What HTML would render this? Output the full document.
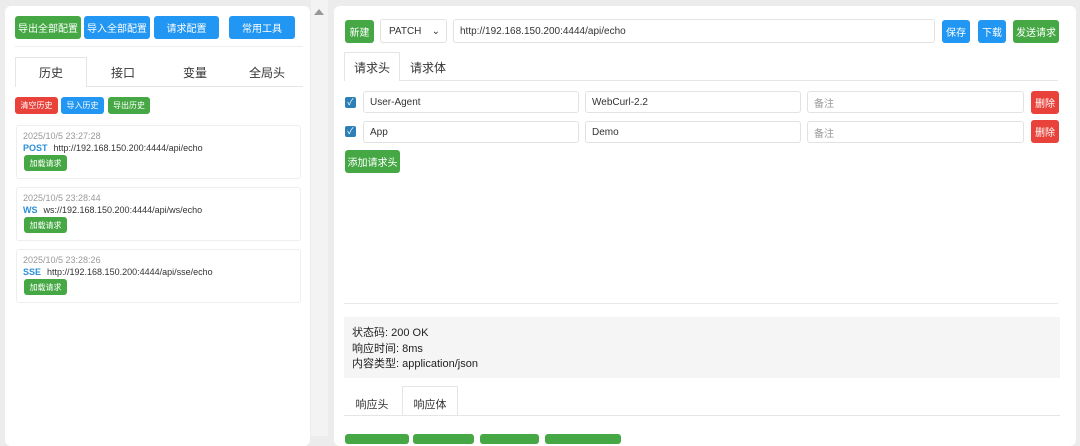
<!DOCTYPE html>
<html><head><meta charset="utf-8"><style>
*{box-sizing:border-box;margin:0;padding:0}
body{width:1080px;height:436px;overflow:hidden;background:#ececec;font-family:"Liberation Sans","Noto Sans CJK SC",sans-serif;position:relative;color:#333}
.a{position:absolute}
.p{background:#fff;border-radius:6px}
.b{position:absolute;color:#fff;font-size:10px;display:flex;align-items:center;justify-content:center;border-radius:3px;white-space:nowrap}
.g{background:#46a845}.bl{background:#2196f3}.r{background:#e8423a}
.in{position:absolute;border:1px solid #e2e2e2;border-radius:3px;font-size:10px;padding-left:6px;display:flex;align-items:center;background:#fff;color:#333}
.card{position:absolute;left:16px;width:285px;border:1px solid #eee;border-radius:3px}
.t{font-size:9px;color:#999;position:absolute;left:6px}
.m{font-size:9px;position:absolute;left:6px;color:#333}
.m b{color:#2b8fd6;margin-right:6px}
.cb{position:absolute;width:11px;height:11px;background:#2d7fb8;border-radius:2px;color:#fff;font-size:9px;line-height:11px;text-align:center}
</style></head><body>
<div class="a p" style="left:5px;top:6px;width:305px;height:440px"></div>
<div class="a" style="left:311px;top:0;width:17px;height:436px;background:#f3f3f3"></div>
<div class="a" style="left:314px;top:9px;width:0;height:0;border-left:5px solid transparent;border-right:5px solid transparent;border-bottom:6px solid #999"></div>
<div class="a p" style="left:334px;top:6px;width:742px;height:440px"></div>

<div class="b g" style="left:15px;top:16px;width:66px;height:23px">导出全部配置</div>
<div class="b bl" style="left:84px;top:16px;width:66px;height:23px">导入全部配置</div>
<div class="b bl" style="left:154px;top:16px;width:65px;height:23px">请求配置</div>
<div class="b bl" style="left:229px;top:16px;width:66px;height:23px">常用工具</div>
<div class="a" style="left:15px;top:46px;width:288px;height:1px;background:#eee"></div>
<div class="a" style="left:15px;top:57px;width:72px;height:30px;border:1px solid #e5e5e5;border-bottom:none;background:#fff"></div>
<div class="a" style="left:87px;top:86px;width:216px;height:1px;background:#e5e5e5"></div>
<div class="a" style="left:15px;top:64px;width:72px;text-align:center;font-size:12px">历史</div>
<div class="a" style="left:87px;top:64px;width:72px;text-align:center;font-size:12px">接口</div>
<div class="a" style="left:159px;top:64px;width:72px;text-align:center;font-size:12px">变量</div>
<div class="a" style="left:231px;top:64px;width:72px;text-align:center;font-size:12px">全局头</div>
<div class="b r" style="left:15px;top:97px;width:43px;height:17px;font-size:8px">清空历史</div>
<div class="b bl" style="left:61px;top:97px;width:43px;height:17px;font-size:8px">导入历史</div>
<div class="b g" style="left:108px;top:97px;width:42px;height:17px;font-size:8px">导出历史</div>

<div class="card" style="top:125px;height:54px"><div class="t" style="top:5px">2025/10/5 23:27:28</div><div class="m" style="top:17px"><b>POST</b>http://192.168.150.200:4444/api/echo</div><div class="b g" style="left:7px;top:29px;width:43px;height:16px;font-size:8px">加载请求</div></div>
<div class="card" style="top:187px;height:54px"><div class="t" style="top:5px">2025/10/5 23:28:44</div><div class="m" style="top:17px"><b>WS</b>ws://192.168.150.200:4444/api/ws/echo</div><div class="b g" style="left:7px;top:29px;width:43px;height:16px;font-size:8px">加载请求</div></div>
<div class="card" style="top:249px;height:54px"><div class="t" style="top:5px">2025/10/5 23:28:26</div><div class="m" style="top:17px"><b>SSE</b>http://192.168.150.200:4444/api/sse/echo</div><div class="b g" style="left:7px;top:29px;width:43px;height:16px;font-size:8px">加载请求</div></div>

<div class="b g" style="left:345px;top:20px;width:29px;height:23px">新建</div>
<div class="in" style="left:380px;top:19px;width:67px;height:24px;padding-left:8px">PATCH<span style="position:absolute;right:6px;font-size:10px">⌄</span></div>
<div class="in" style="left:453px;top:19px;width:482px;height:24px">http://192.168.150.200:4444/api/echo</div>
<div class="b bl" style="left:942px;top:20px;width:28px;height:23px">保存</div>
<div class="b bl" style="left:978px;top:20px;width:28px;height:23px">下载</div>
<div class="b g" style="left:1013px;top:20px;width:46px;height:23px">发送请求</div>

<div class="a" style="left:344px;top:52px;width:56px;height:29px;border:1px solid #e5e5e5;border-bottom:none;background:#fff"></div>
<div class="a" style="left:400px;top:80px;width:658px;height:1px;background:#e5e5e5"></div>
<div class="a" style="left:344px;top:59px;width:56px;text-align:center;font-size:12px">请求头</div>
<div class="a" style="left:400px;top:59px;width:56px;text-align:center;font-size:12px">请求体</div>

<div class="cb" style="left:345px;top:97px">✓</div>
<div class="in" style="left:363px;top:91px;width:216px;height:22px">User-Agent</div>
<div class="in" style="left:585px;top:91px;width:216px;height:22px">WebCurl-2.2</div>
<div class="in" style="left:807px;top:91px;width:217px;height:22px;color:#999">备注</div>
<div class="b r" style="left:1031px;top:91px;width:28px;height:23px">删除</div>
<div class="cb" style="left:345px;top:126px">✓</div>
<div class="in" style="left:363px;top:121px;width:216px;height:22px">App</div>
<div class="in" style="left:585px;top:121px;width:216px;height:22px">Demo</div>
<div class="in" style="left:807px;top:121px;width:217px;height:22px;color:#999">备注</div>
<div class="b r" style="left:1031px;top:120px;width:28px;height:23px">删除</div>
<div class="b g" style="left:345px;top:150px;width:55px;height:23px">添加请求头</div>

<div class="a" style="left:344px;top:303px;width:714px;height:1px;background:#e8e8e8"></div>
<div class="a" style="left:344px;top:317px;width:716px;height:61px;background:#f5f5f5"></div>
<div class="a" style="left:352px;top:326px;font-size:11px;line-height:15.5px;color:#222">状态码: 200 OK<br>响应时间: 8ms<br>内容类型: application/json</div>
<div class="a" style="left:402px;top:386px;width:56px;height:30px;border:1px solid #e5e5e5;border-bottom:none;background:#fff"></div>
<div class="a" style="left:344px;top:415px;width:716px;height:1px;background:#e5e5e5"></div>
<div class="a" style="left:344px;top:396px;width:56px;text-align:center;font-size:11px">响应头</div>
<div class="a" style="left:402px;top:396px;width:56px;text-align:center;font-size:11px">响应体</div>
<div class="b g" style="left:345px;top:434px;width:64px;height:10px"></div>
<div class="b g" style="left:413px;top:434px;width:61px;height:10px"></div>
<div class="b g" style="left:480px;top:434px;width:59px;height:10px"></div>
<div class="b g" style="left:545px;top:434px;width:76px;height:10px"></div>
</body></html>
